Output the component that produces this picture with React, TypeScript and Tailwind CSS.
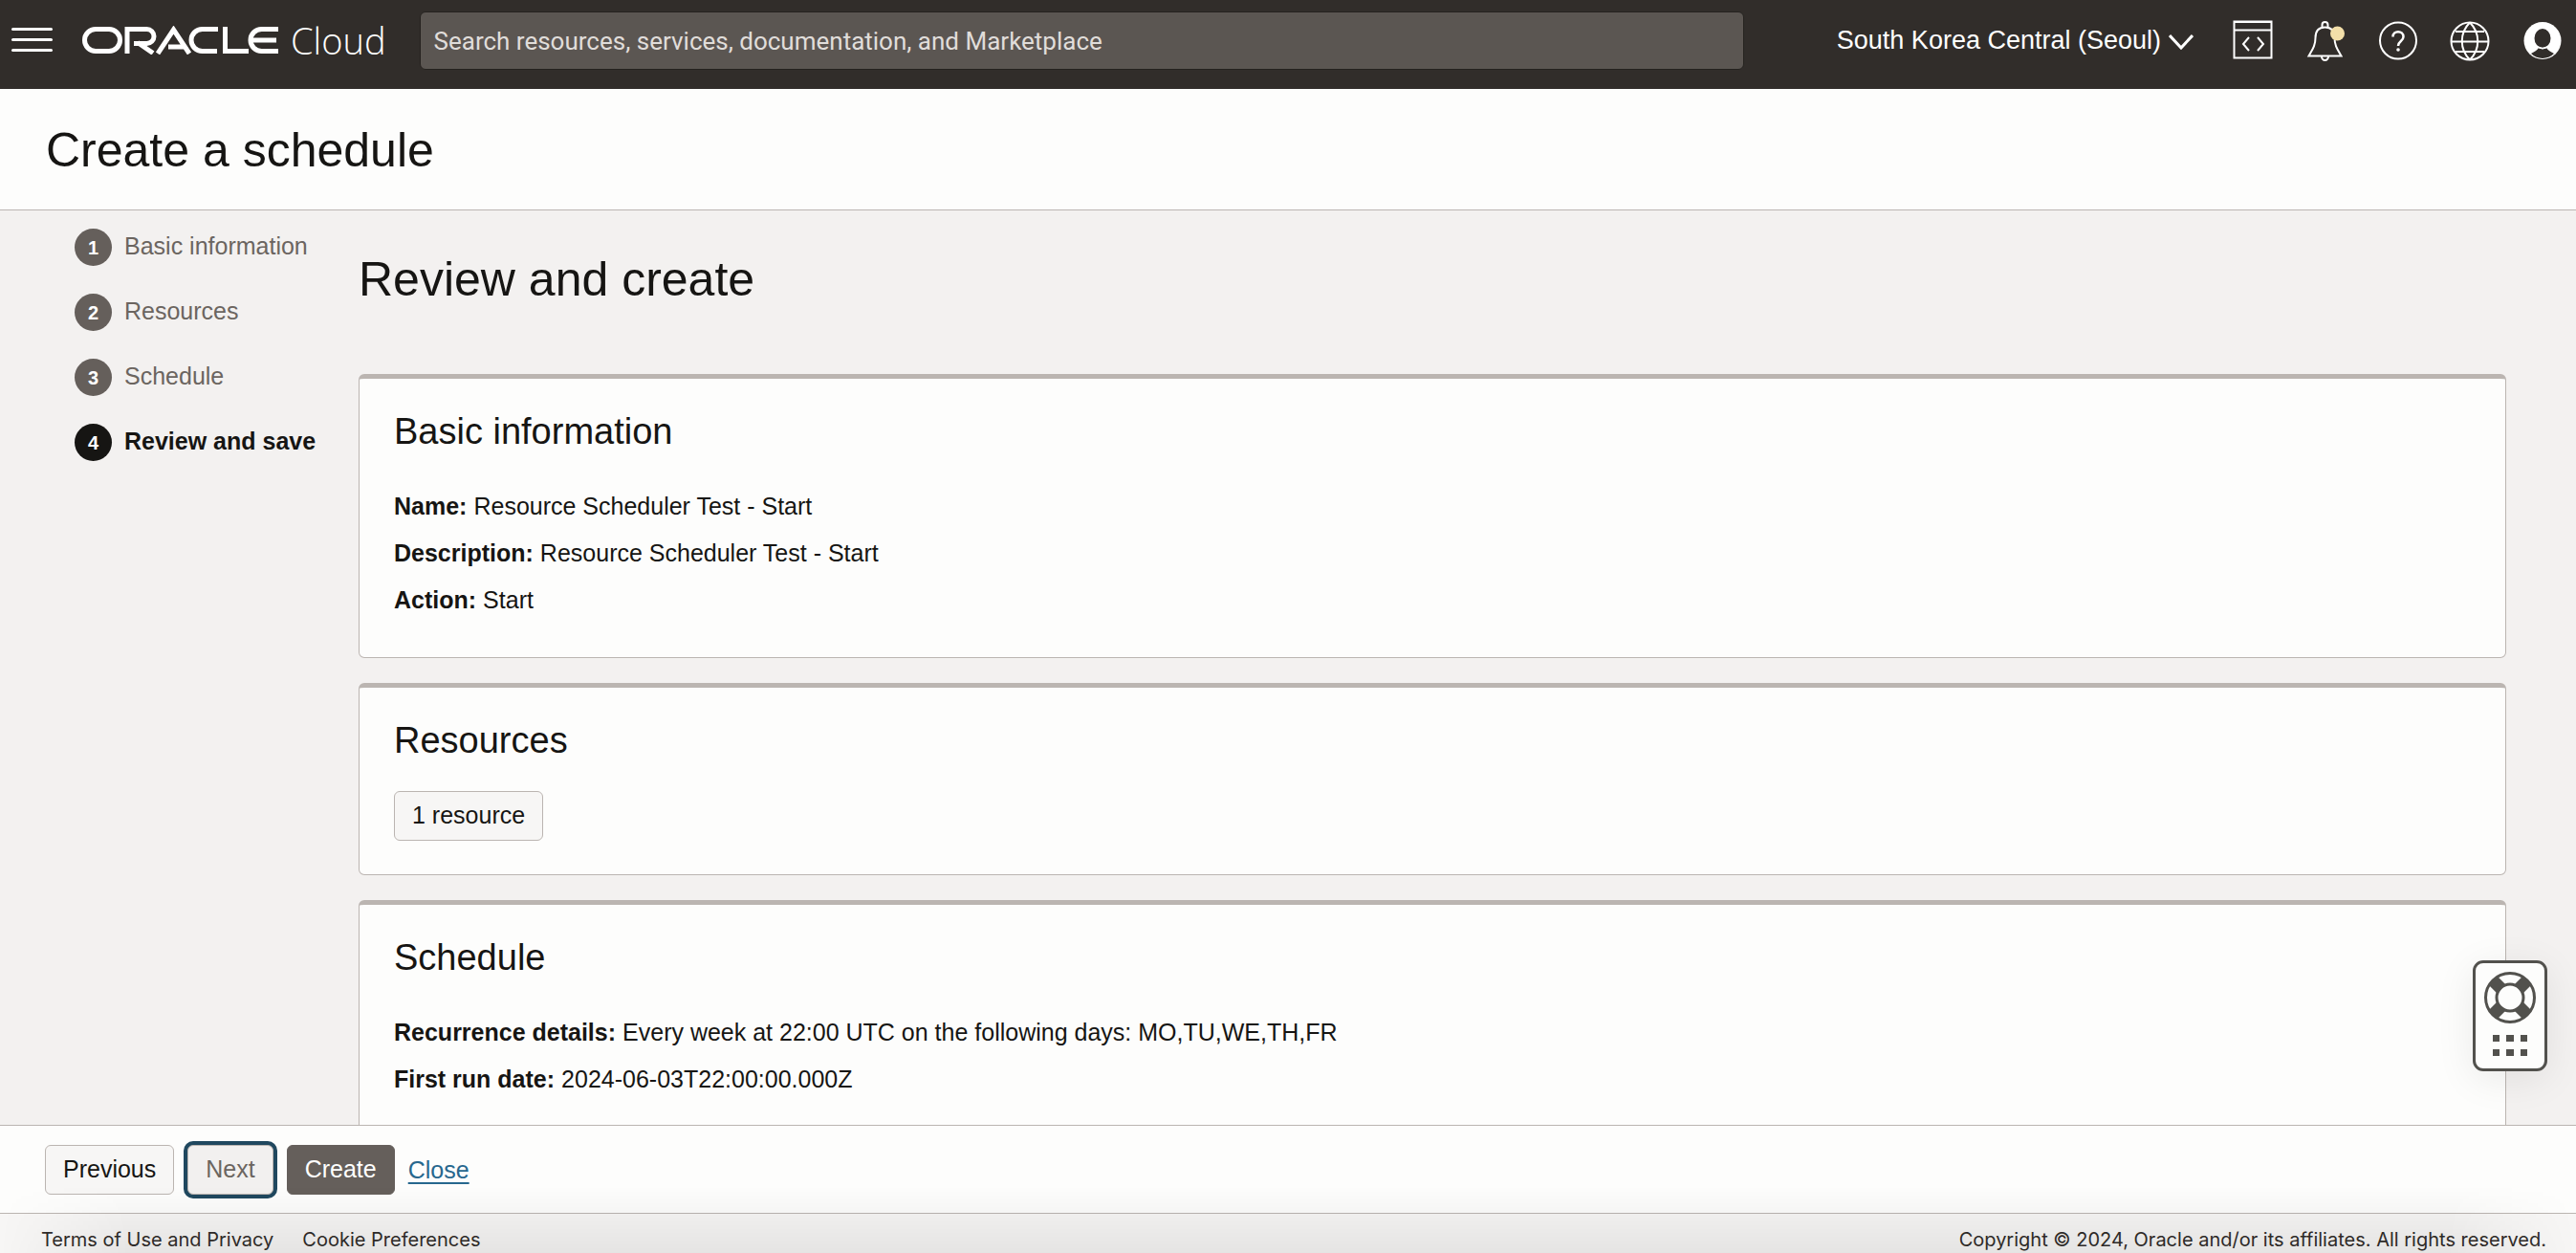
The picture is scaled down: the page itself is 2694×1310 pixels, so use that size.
import React from "react";

const steps = ["Basic information", "Resources", "Schedule", "Review and save"];

function OracleLogo() {
  return (
    <svg aria-label="Oracle" role="img" viewBox="0 0 206 30" className="h-[30px] w-[206px] shrink-0" fill="none" stroke="white" strokeWidth="5">
      <rect x="2.5" y="3.5" width="37" height="23" rx="11.5" />
      <path d="M47 29V3.500H67.500a7.500 7.500 0 0 1 0 15H54M58 17.500l16 11" />
      <path d="M79 29L95.500 4l16.500 25M90 22h16" />
      <path d="M142 3.500h-16.500a11.500 11.500 0 0 0 0 23H141" />
      <path d="M149.500 1v25.500H174" />
      <path d="M205 3.500h-17.500a11.500 11.500 0 0 0 0 23H205M178 15h25" />
    </svg>
  );
}

function IconButton({ label, children }: { label: string; children: React.ReactNode }) {
  return (
    <button type="button" aria-label={label} className="h-11 w-11 shrink-0">
      <svg viewBox="0 0 44 44" className="h-11 w-11" fill="none" stroke="white" strokeWidth="2">
        {children}
      </svg>
    </button>
  );
}

function TopBar() {
  return (
    <header className="flex h-[93px] shrink-0 items-start bg-[#312d2a] px-3 text-white">
      <button type="button" aria-label="Navigation menu" className="mt-[29px] flex h-[25px] w-[43px] shrink-0 flex-col justify-between">
        <span className="h-[3px] w-full rounded bg-white" />
        <span className="h-[3px] w-full rounded bg-white" />
        <span className="h-[3px] w-full rounded bg-white" />
      </button>
      <a href="#" className="ml-[31px] mt-[22px] flex h-10 shrink-0 items-center gap-3">
        <OracleLogo />
        <span className="font-['Open_Sans',sans-serif] text-[38px] font-light leading-10">Cloud</span>
      </a>
      <input
        aria-label="Search"
        placeholder="Search resources, services, documentation, and Marketplace"
        className="ml-[35px] mt-3 h-[61px] w-[1385px] min-w-0 rounded-md border border-[#25221f] bg-[#5b5652] px-[14px] font-[Roboto,sans-serif] text-[26px] text-white placeholder:text-[#e0ddda]"
      />
      <div className="ml-auto mt-5 flex shrink-0 items-center gap-8">
        <button type="button" className="mr-2 flex items-center gap-2 whitespace-nowrap text-[27px] leading-[44px]">
          South Korea Central (Seoul)
          <svg viewBox="0 0 26 16" className="mt-1 h-4 w-[26px]" fill="none" stroke="white" strokeWidth="3">
            <path d="M1 1l12 13L25 1" />
          </svg>
        </button>
        <IconButton label="Developer tools">
          <path d="M2.500 2.500h39v38h-39zM2.500 11.500h39M18 19l-6 7 6 7M27 19l6 7-6 7" />
          <path d="M2 3h40" />
        </IconButton>
        <IconButton label="Announcements">
          <path d="M4.500 38.500h34c-4-7-7-11-7-19 0-7-3-11-10-11s-10 4-10 11c0 8-3 12-7 19z" />
          <path d="M18.500 8.500V6a3 3 0 0 1 6 0v2.500M18 39a3.500 4 0 0 0 7 0" />
          <circle cx="34.500" cy="15" r="7.500" fill="#f3dfa9" stroke="none" />
        </IconButton>
        <IconButton label="Help">
          <circle cx="22" cy="22.500" r="19" />
          <path d="M16.500 18.500c0-7 11-7 11 0 0 4.500-5.500 4.500-5.500 9.500" strokeWidth="2.500" />
          <circle cx="22" cy="32" r="1.800" fill="white" stroke="none" />
        </IconButton>
        <IconButton label="Languages">
          <circle cx="21" cy="23" r="19.500" />
          <path d="M21 3.500c-11 11-11 28 0 39M21 3.500c11 11 11 28 0 39M2 23.500h38M6 13h30M6 34h30" />
        </IconButton>
        <IconButton label="Profile">
          <circle cx="21" cy="22.500" r="19.500" fill="white" stroke="none" />
          <ellipse cx="21" cy="20" rx="8.500" ry="10" fill="#312d2a" stroke="none" />
          <path d="M9 36c3-2 6-3 8-6l4 1.500 4-1.500c2 3 5 4 8 6-7 6.500-17 6.500-24 0z" fill="#312d2a" stroke="none" />
          <path d="M16 29q5 3 10 0" strokeWidth="1.500" />
        </IconButton>
      </div>
    </header>
  );
}

function StepNav() {
  return (
    <nav aria-label="Progress" className="w-[375px] shrink-0 pl-[78px] pt-[19px]">
      <ol className="flex flex-col gap-[29px]">
        {steps.map((step, i) => {
          const current = i === steps.length - 1;
          return (
            <li key={step} aria-current={current ? "step" : undefined} className="flex gap-[13px]">
              <span
                className={`flex h-[39px] w-[39px] shrink-0 items-center justify-center rounded-full pt-px text-[20px] font-bold text-white ${current ? "bg-[#161513]" : "bg-[#655f5b]"}`}
              >
                {i + 1}
              </span>
              <span className={`whitespace-nowrap text-[25px] leading-[36px] ${current ? "font-bold" : "text-[#6b6560]"}`}>{step}</span>
            </li>
          );
        })}
      </ol>
    </nav>
  );
}

function Card({ title, children }: { title: string; children: React.ReactNode }) {
  return (
    <section className="rounded-md border border-t-[5px] border-[#bbb5b1] bg-[#fdfdfc] px-9 pb-[35px] pt-8">
      <h3 className="text-[38px] leading-[46px]">{title}</h3>
      {children}
    </section>
  );
}

function Details({ rows }: { rows: [string, string][] }) {
  return (
    <dl className="mt-[31px] text-[25px] leading-[49px]">
      {rows.map(([term, value]) => (
        <div key={term} className="flex gap-[7px]">
          <dt className="font-bold">{term}:</dt>
          <dd>{value}</dd>
        </div>
      ))}
    </dl>
  );
}

const buttonBase = "h-[52px] rounded-md border px-[18px] text-[25px]";

function ActionBar() {
  return (
    <div className="flex h-[92px] shrink-0 items-start gap-[14px] border-t border-[#bbb5b1] bg-[#fdfdfc] pl-[47px] pt-5">
      <button type="button" className={`${buttonBase} border-[#bbb5b1] bg-[#f7f6f5]`}>Previous</button>
      <button type="button" className={`${buttonBase} border-[#bbb5b1] bg-[#f2f0ef] text-[#6b6560] ring-4 ring-[#20485f]`}>Next</button>
      <button type="button" className={`${buttonBase} border-[#655f5b] bg-[#655f5b] text-white`}>Create</button>
      <a href="#" className="text-[25px] leading-[52px] text-[#27678e] underline decoration-2 underline-offset-4">Close</a>
    </div>
  );
}

function Footer() {
  return (
    <footer className="relative flex h-[42px] shrink-0 items-start justify-between border-t border-[#bbb5b1] bg-[#f7f6f5] pl-[43px] pr-[31px] pt-3 font-[Inter,sans-serif] text-[20px] leading-[30px] text-[#312d2a]">
      <div className="pointer-events-none absolute inset-x-0 bottom-0 h-[70px] bg-linear-to-b from-transparent to-black/7 mask-l-from-95% mask-r-from-95%" />
      <div className="flex gap-[30px]">
        <a href="#">Terms of Use and Privacy</a>
        <a href="#">Cookie Preferences</a>
      </div>
      <p>Copyright © 2024, Oracle and/or its affiliates. All rights reserved.</p>
    </footer>
  );
}

function SupportWidget() {
  return (
    <button
      type="button"
      aria-label="Support"
      className="absolute bottom-[190px] right-[30px] h-[116px] w-[78px] rounded-[11px] border-[3px] border-[#52514d] bg-[#fdfdfc] shadow-[0_8px_40px_rgba(0,0,0,0.08)]"
    >
      <svg viewBox="3 3 72 110" className="h-full w-full" fill="none" stroke="#52514d">
        <path d="M21 21l36 36M57 21L21 57" strokeWidth="13" />
        <circle cx="39" cy="39" r="14" fill="#fdfdfc" strokeWidth="3" />
        <circle cx="39" cy="39" r="25.500" strokeWidth="3" />
        <g fill="#52514d" stroke="none">
          <path d="M21 78h7v7h-7zM35 78h8v7h-8zM50 78h7v7h-7zM21 93h7v7h-7zM35 93h8v7h-8zM50 93h7v7h-7z" />
        </g>
      </svg>
    </button>
  );
}

export default function App() {
  return (
    <div className="relative flex h-screen flex-col overflow-hidden bg-[#f3f1f0] font-['Liberation_Sans',sans-serif] text-[#161513]">
      <TopBar />
      <div className="flex h-[127px] shrink-0 items-center border-b border-[#bbb5b1] bg-[#fdfdfc] px-12 pt-0.5">
        <h1 className="text-[50px] leading-[60px]">Create a schedule</h1>
      </div>
      <div className="flex min-h-0 flex-1 overflow-hidden">
        <StepNav />
        <main className="flex min-w-0 flex-1 flex-col gap-[26px] pr-[73px]">
          <h2 className="mb-[43px] mt-[42px] text-[50px] leading-[60px]">Review and create</h2>
          <Card title="Basic information">
            <Details
              rows={[
                ["Name", "Resource Scheduler Test - Start"],
                ["Description", "Resource Scheduler Test - Start"],
                ["Action", "Start"],
              ]}
            />
          </Card>
          <Card title="Resources">
            <button type="button" className={`${buttonBase} mt-[30px] block border-[#bbb5b1] bg-[#f7f6f5]`}>1 resource</button>
          </Card>
          <Card title="Schedule">
            <Details
              rows={[
                ["Recurrence details", "Every week at 22:00 UTC on the following days: MO,TU,WE,TH,FR"],
                ["First run date", "2024-06-03T22:00:00.000Z"],
              ]}
            />
          </Card>
        </main>
      </div>
      <ActionBar />
      <Footer />
      <SupportWidget />
    </div>
  );
}
